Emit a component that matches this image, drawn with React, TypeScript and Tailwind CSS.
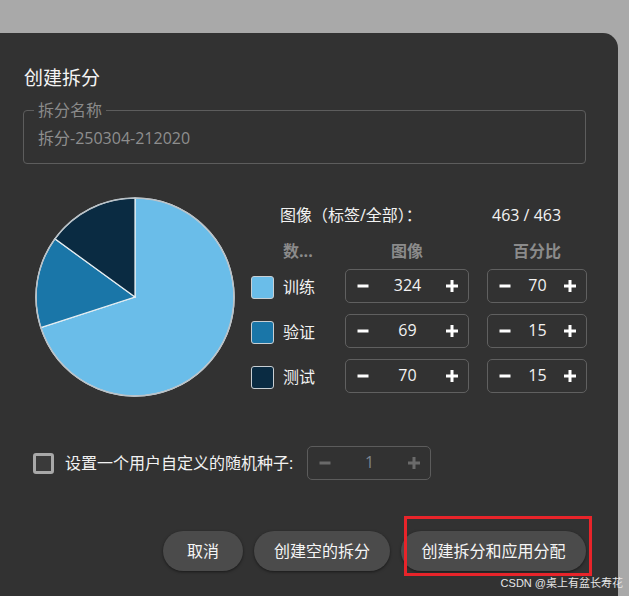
import React from "react";

const FONT = "font-['Open_Sans','Noto_Sans_CJK_SC',sans-serif]";

function Minus({ color = "#ffffff" }: { color?: string }) {
  return (
    <svg width="12" height="12" viewBox="0 0 12 12">
      <rect x="0.5" y="4.5" width="11" height="3" fill={color} />
    </svg>
  );
}

function Plus({ color = "#ffffff" }: { color?: string }) {
  return (
    <svg width="12" height="12" viewBox="0 0 12 12">
      <rect x="0" y="4.5" width="12" height="3" fill={color} />
      <rect x="4.5" y="0" width="3" height="12" fill={color} />
    </svg>
  );
}

function Spinner({
  value,
  wide,
  disabled,
}: {
  value: string;
  wide?: boolean;
  disabled?: boolean;
}) {
  const iconColor = disabled ? "#6a6a6a" : "#ffffff";
  return (
    <div
      className={`${wide ? "w-[124px]" : "w-[100px]"} h-[34px] rounded-[5px] border ${
        disabled ? "border-[#5c5c5c]" : "border-[#606060]"
      } flex items-center pl-[11px] pr-[10px]`}
    >
      <Minus color={iconColor} />
      <div
        className={`flex-1 text-center text-[16px] leading-[20px] pb-[3px] ${
          disabled ? "text-[#7d8590]" : "text-[#f2f2f2]"
        }`}
      >
        {value}
      </div>
      <Plus color={iconColor} />
    </div>
  );
}

const rows = [
  { label: "训练", color: "#6abde9", img: "324", pct: "70" },
  { label: "验证", color: "#1a76a8", img: "69", pct: "15" },
  { label: "测试", color: "#0a2b42", img: "70", pct: "15" },
];

export default function App() {
  return (
    <div
      className={`relative w-[629px] h-[596px] bg-[#a9a9a9] overflow-hidden pt-[33px] ${FONT}`}
    >
      <div className="w-[618px] h-[563px] bg-[#323232] rounded-tr-[15px] flex flex-col">
        {/* Title */}
        <div className="pt-[32px] pl-[24px] text-[19px] leading-[26px] text-[#f4f4f4]">
          创建拆分
        </div>

        {/* Name field */}
        <div className="relative mt-[19px] ml-[23px] w-[563px] h-[54px] rounded-[4px] border border-[#5d5d5d] flex items-center pl-[14px]">
          <div className="absolute -top-[12px] left-[10px] px-[4px] bg-[#323232] text-[16px] leading-[22px] text-[#8a8a8a]">
            拆分名称
          </div>
          <div className="text-[16px] leading-[22px] text-[#8e8e8e] pt-[2px]">
            拆分-250304-212020
          </div>
        </div>

        {/* Pie + table */}
        <div className="mt-[33px] flex">
          <div className="ml-[35px] w-[200px] h-[200px]">
            <svg width="200" height="200" viewBox="0 0 200 200">
              <path
                d="M100,100 L100,1 A99,99 0 1 1 5.84,130.59 Z"
                fill="#6abde9"
                stroke="#e6eef2"
                strokeWidth="1.2"
              />
              <path
                d="M100,100 L5.84,130.59 A99,99 0 0 1 19.91,41.81 Z"
                fill="#1a76a8"
                stroke="#e6eef2"
                strokeWidth="1.2"
              />
              <path
                d="M100,100 L19.91,41.81 A99,99 0 0 1 100,1 Z"
                fill="#0a2b42"
                stroke="#e6eef2"
                strokeWidth="1.2"
              />
              <circle cx="100" cy="100" r="99" fill="none" stroke="#b9c2c8" strokeWidth="1.5" />
            </svg>
          </div>

          <div className="ml-[16px] flex flex-col">
            <div className="h-[36px] flex items-center pl-[29px] text-[16px] text-[#f2f2f2]">
              <div className="w-[212px] whitespace-nowrap">图像（标签/全部）：</div>
              <div className="text-[16px]">463 / 463</div>
            </div>

            <div className="h-[36px] flex items-center text-[16px] font-bold text-[#8b8b8b]">
              <div className="w-[94px] pl-[32px]">数...</div>
              <div className="w-[124px] text-center">图像</div>
              <div className="w-[100px] ml-[18px] text-center">百分比</div>
            </div>

            <div className="flex flex-col gap-[11px]">
              {rows.map((r) => (
                <div key={r.label} className="h-[34px] flex items-center">
                  <div
                    className="w-[23px] h-[23px] rounded-[3px] border border-[#c9cfd3] mt-[2px]"
                    style={{ backgroundColor: r.color }}
                  />
                  <div className="w-[71px] pl-[9px] text-[16px] text-[#f2f2f2] pt-[2px]">
                    {r.label}
                  </div>
                  <Spinner value={r.img} wide />
                  <div className="ml-[18px]">
                    <Spinner value={r.pct} />
                  </div>
                </div>
              ))}
            </div>
          </div>
        </div>

        {/* Seed row */}
        <div className="mt-[49px] h-[34px] flex items-center pl-[33px]">
          <div className="w-[21px] h-[21px] rounded-[3px] border-[3px] border-[#a8a8a8] bg-[#3a3a3a]" />
          <div className="ml-[11px] w-[242px] whitespace-nowrap text-[16px] text-[#f2f2f2]">
            设置一个用户自定义的随机种子:
          </div>
          <Spinner value="1" wide disabled />
        </div>

        {/* Buttons */}
        <div className="mt-[51px] flex justify-end gap-[11px] pr-[32px]">
          <button className="w-[80px] h-[40px] rounded-full bg-[#4b4b4b] text-[16px] text-[#f5f5f5] shadow-[0_1px_3px_rgba(0,0,0,0.5)]">
            取消
          </button>
          <button className="w-[136px] h-[40px] rounded-full bg-[#4b4b4b] text-[16px] text-[#f5f5f5] shadow-[0_1px_3px_rgba(0,0,0,0.5)]">
            创建空的拆分
          </button>
          <button className="w-[185px] h-[40px] rounded-full bg-[#4b4b4b] text-[16px] text-[#f5f5f5] shadow-[0_1px_3px_rgba(0,0,0,0.5)]">
            创建拆分和应用分配
          </button>
        </div>
      </div>

      {/* Red annotation box */}
      <div className="absolute left-[404px] top-[516px] w-[188px] h-[60px] border-[3px] border-[#e8242a] pointer-events-none" />

      {/* Watermark */}
      <div className="absolute right-[6px] top-[576px] whitespace-nowrap text-[11px] leading-[15px] text-[#e6e6e6] font-['Liberation_Sans','Noto_Sans_CJK_SC',sans-serif]">
        CSDN @桌上有盆长寿花
      </div>
    </div>
  );
}
